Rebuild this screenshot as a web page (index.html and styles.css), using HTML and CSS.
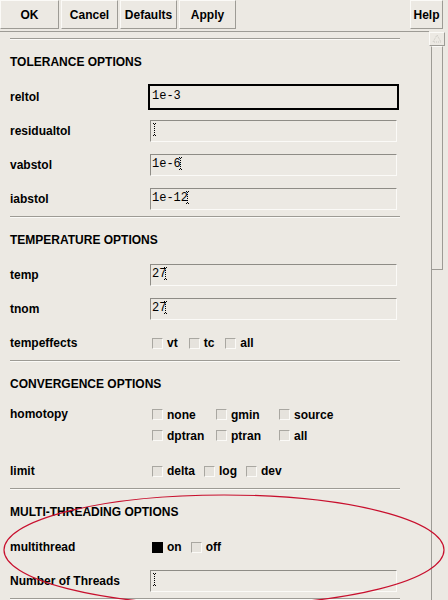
FILE: index.html
```html
<!DOCTYPE html>
<html>
<head>
<meta charset="utf-8">
<link rel="stylesheet" href="styles.css">
</head>
<body>
<div class="toolbar">
  <button class="btn btn-ok">OK</button>
  <button class="btn">Cancel</button>
  <button class="btn">Defaults</button>
  <button class="btn">Apply</button>
  <span class="spacer"></span>
  <button class="btn btn-help">Help</button>
</div>
<div class="body">
  <div class="panel">
    <div class="sep sep-first"></div>
    <div class="heading">TOLERANCE OPTIONS</div>
    <div class="row"><span class="label">reltol</span><div class="field focused"><span class="val">1e-3</span></div></div>
    <div class="row"><span class="label">residualtol</span><div class="field"><span class="cursor"></span></div></div>
    <div class="row"><span class="label">vabstol</span><div class="field"><span class="val">1e-6</span><span class="cursor after"></span></div></div>
    <div class="row"><span class="label">iabstol</span><div class="field"><span class="val">1e-12</span><span class="cursor after"></span></div></div>

    <div class="sep"></div>
    <div class="heading">TEMPERATURE OPTIONS</div>
    <div class="row"><span class="label">temp</span><div class="field"><span class="val">27</span><span class="cursor after"></span></div></div>
    <div class="row"><span class="label">tnom</span><div class="field"><span class="val">27</span><span class="cursor after"></span></div></div>
    <div class="row"><span class="label">tempeffects</span>
      <div class="checks checks-wide">
        <span class="cb"><span class="box"></span>vt</span>
        <span class="cb"><span class="box"></span>tc</span>
        <span class="cb"><span class="box"></span>all</span>
      </div>
    </div>

    <div class="sep"></div>
    <div class="heading">CONVERGENCE OPTIONS</div>
    <div class="row row-top"><span class="label label-line">homotopy</span>
      <div class="grid">
        <span class="cb"><span class="box"></span>none</span>
        <span class="cb"><span class="box"></span>gmin</span>
        <span class="cb"><span class="box"></span>source</span>
        <span class="cb"><span class="box"></span>dptran</span>
        <span class="cb"><span class="box"></span>ptran</span>
        <span class="cb"><span class="box"></span>all</span>
      </div>
    </div>
    <div class="row"><span class="label">limit</span>
      <div class="checks">
        <span class="cb"><span class="box"></span>delta</span>
        <span class="cb"><span class="box"></span>log</span>
        <span class="cb"><span class="box"></span>dev</span>
      </div>
    </div>

    <div class="sep"></div>
    <div class="heading">MULTI-THREADING OPTIONS</div>
    <div class="row"><span class="label">multithread</span>
      <div class="checks">
        <span class="cb"><span class="box on"></span>on</span>
        <span class="cb"><span class="box"></span>off</span>
      </div>
    </div>
    <div class="row"><span class="label">Number of Threads</span><div class="field"><span class="cursor"></span></div></div>
    <div class="sep"></div>
  </div>
  <div class="scrollbar">
    <div class="arrow">
      <svg width="14" height="12" viewBox="0 0 14 12"><path d="M7 2 L11 9 H3 Z" fill="none" stroke="#c8c6c0" stroke-width="1" stroke-dasharray="1 1"/></svg>
    </div>
    <div class="thumb"></div>
    <div class="trough"></div>
  </div>
</div>
<svg class="annotation" width="448" height="600" viewBox="0 0 448 600">
  <ellipse cx="224" cy="550" rx="220" ry="55" fill="none" stroke="#c8102e" stroke-width="1.2"/>
</svg>
</body>
</html>
```

FILE: styles.css
```css
html, body {
  margin: 0;
  padding: 0;
}
body {
  width: 448px;
  height: 600px;
  overflow: hidden;
  background: #ece9e3;
  font: bold 12px "Liberation Sans", Arial, sans-serif;
  color: #000;
  position: relative;
}
.toolbar {
  display: flex;
  height: 31px;
  align-items: flex-start;
}
.btn {
  height: 29px;
  width: 57px;
  margin: 0 2px 0 0;
  padding: 0;
  background: #ece9e3;
  border: 1px solid;
  border-color: #fbfaf7 #9d9b95 #9d9b95 #fbfaf7;
  font: bold 12px "Liberation Sans", Arial, sans-serif;
  color: #000;
  text-align: center;
}
.btn-ok { width: 59px; }
.spacer { flex: 1; }
.btn-help { width: 33px; margin-right: 5px; }

.body {
  display: flex;
  height: 569px;
}
.panel {
  width: 419px;
  padding-left: 10px;
  border-top: 1px solid #9d9b95;
}
.sep {
  width: 390px;
  height: 0;
  border-top: 1px solid #9d9b95;
  border-bottom: 1px solid #fbfaf7;
}
.sep-first { margin-top: 6px; }
.heading {
  height: 40px;
  box-sizing: border-box;
  padding-top: 15px;
  line-height: 14px;
}
.row {
  display: flex;
  align-items: center;
  height: 34px;
}
.row-top {
  align-items: flex-start;
  height: 52px;
  box-sizing: border-box;
  padding-top: 2px;
}
.label {
  width: 140px;
  flex: none;
  line-height: 14px;
}
.label-line { line-height: 20px; }
.field {
  width: 247px;
  height: 22px;
  box-sizing: border-box;
  border: 1px solid;
  border-color: #8e8c86 #fbfaf7 #fbfaf7 #8e8c86;
  padding: 1px 0 0 1px;
  font: 12px "Liberation Mono", "Courier New", monospace;
  line-height: 16px;
  display: flex;
  align-items: flex-start;
}
.field.focused {
  width: 251px;
  height: 26px;
  margin-left: -2px;
  border: 2px solid #000;
  padding: 2px 0 0 2px;
}
.val { white-space: pre; }
.cursor {
  display: inline-block;
  width: 3px;
  height: 13px;
  margin-top: 1px;
  margin-left: 1px;
  border-top: 1px dotted #000;
  border-bottom: 1px dotted #000;
  box-sizing: border-box;
  background: linear-gradient(#000 50%, transparent 50%) 1px 0 / 1px 2px repeat-y;
}
.cursor.after { margin-left: -2px; }

.checks {
  display: flex;
  align-items: center;
  padding-left: 2px;
}
.cb {
  display: inline-flex;
  align-items: center;
  margin-right: 9px;
  line-height: 14px;
}
.checks-wide .cb { margin-right: 11px; }
.box {
  width: 11px;
  height: 11px;
  box-sizing: border-box;
  border: 1px solid;
  border-color: #a9a7a1 #fbfaf7 #fbfaf7 #a9a7a1;
  background: #e6e3dd;
  margin-right: 4px;
  flex: none;
}
.box.on {
  background: #000;
  border-color: #000;
}
.grid {
  display: grid;
  grid-template-columns: 64px 63px auto;
  grid-auto-rows: 21px;
  padding-left: 2px;
  align-items: center;
}

.scrollbar {
  width: 16px;
  margin-top: 1px;
  display: flex;
  flex-direction: column;
}
.arrow {
  height: 14px;
  box-sizing: border-box;
  border: 1px solid;
  border-color: #fbfaf7 #9d9b95 #9d9b95 #fbfaf7;
  display: flex;
  align-items: center;
  justify-content: center;
}
.thumb {
  height: 224px;
  box-sizing: border-box;
  border: 1px solid;
  border-color: #fbfaf7 #9d9b95 #9d9b95 #9d9b95;
  margin: 0 2px;
}
.trough {
  flex: 1;
  border-left: 1px solid #9d9b95;
  margin-left: 2px;
}
.annotation {
  position: absolute;
  left: 0;
  top: 0;
  pointer-events: none;
}
```
